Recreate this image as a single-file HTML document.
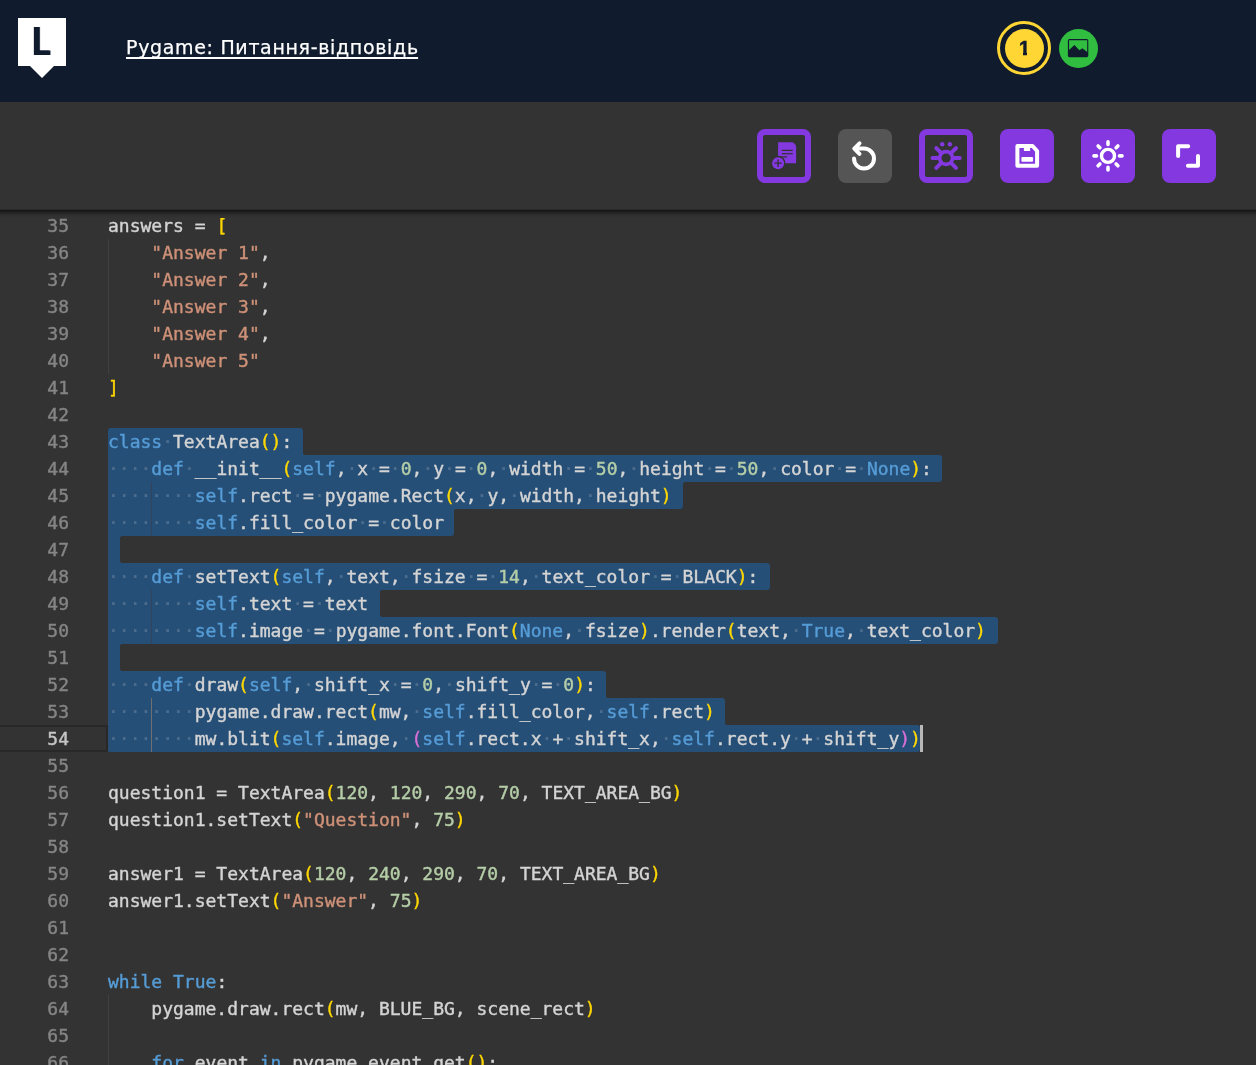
<!DOCTYPE html>
<html lang="uk">
<head>
<meta charset="utf-8">
<title>Pygame: Питання-відповідь</title>
<style>
*{box-sizing:border-box;margin:0;padding:0}
html,body{width:1256px;height:1065px;overflow:hidden;background:#333333}
body{position:relative;font-family:"Liberation Sans",sans-serif}
.header{position:absolute;left:0;top:0;width:1256px;height:102px;background:#101c2e}
.logo{position:absolute;left:18px;top:18px;width:48px;height:60px}
.logo svg{display:block}
.L{will-change:transform;position:absolute;left:14px;top:3.1px;font-weight:bold;font-size:41.2px;line-height:41.2px;color:#101c2e;transform-origin:0 0;transform:scaleX(0.70);text-shadow:2.6px 0 0 #101c2e}
.title{will-change:transform;position:absolute;left:126px;top:35px;color:#fff;font-family:"DejaVu Sans","Liberation Sans",sans-serif;font-size:19px;line-height:24px;white-space:nowrap;letter-spacing:0.67px;text-decoration-skip-ink:none;-webkit-text-stroke:0.25px #fff;text-decoration:underline;text-decoration-thickness:1.5px;text-underline-offset:3px}
.step{position:absolute;left:1004.8px;top:28.7px;width:39.5px;height:39.5px;border-radius:50%;background:#ffd633;-webkit-text-stroke:0.5px #101c2e;color:#101c2e;font-weight:bold;font-size:19.5px;line-height:22px}
.step span{will-change:transform;position:absolute;left:14.2px;top:8.1px;display:block;width:11px;height:22px}
.step span::before,.step span::after{content:"";position:absolute;top:14.4px;height:4.6px;background:#ffd633}
.step span::before{left:-1px;width:5.2px}
.step span::after{left:7.7px;width:5px}
.ring{position:absolute;left:996.9px;top:20.8px;width:54.4px;height:54.4px;border:3.4px solid #ffd633;border-radius:50%}
.imgbtn{position:absolute;left:1059px;top:28.8px;width:39.3px;height:39.3px;border-radius:50%;background:#30bd40}
.imgbtn svg{position:absolute;left:0;top:0}
.toolbar{position:absolute;left:0;top:102px;width:1256px;height:107px;background:#333333}
.btn{position:absolute;top:27px;width:54px;height:54px;border-radius:8px;background:#8338e0}
.btn.o{background:transparent;border:6px solid #8338e0}
.btn.gr{background:#555555}
.btn svg{position:absolute;left:0;top:0}
.btn.o svg{left:-6px;top:-6px}
.editor{position:absolute;left:0;top:209px;width:1256px;height:856px;background:#333333;overflow:hidden}
.ed{position:absolute;left:0;top:-209px;width:1256px;height:1065px;font-family:"DejaVu Sans Mono","Liberation Mono",monospace;font-size:18px;line-height:27px;color:#d4d4d4;white-space:pre;-webkit-text-stroke:0.4px;will-change:transform}
.ln{position:absolute;left:0;width:69px;height:27px;text-align:right;color:#858585}
.ln.act{color:#c6c6c6}
.cl{position:absolute;left:108px;height:27px}
.k{color:#569cd6}.s{color:#ce9178}.n{color:#b5cea8}
.b0{color:#ffd700}.b1{color:#da70d6}.b2{color:#179fff}
.w{color:rgba(227,228,226,0.19);-webkit-text-stroke:0.2px}
.g{position:absolute;width:1px;height:27px;background:#404040}
.gs{background:#34425c}.gs0{background:#2d4b6c}.ga{background:#707070}
.sel{position:absolute;left:108px;height:27px;background:#264f78}
.cc{position:absolute;width:3px;height:3px}
.curline{position:absolute;left:-2px;width:110px;height:27px;border:2px solid #282828}
.cursor{position:absolute;width:3px;height:27px;background:#b8b8b8}
.shadow{position:absolute;left:0;top:209px;width:1256px;height:9px;background:linear-gradient(to bottom,#2a2a2a 0px,#2a2a2a 1px,#171717 1px,#171717 2px,#1c1c1c 2px,#1c1c1c 3px,#222222 3px,#222222 4px,#282828 4px,#282828 5px,#2c2c2c 5px,#2c2c2c 6px,#2f2f2f 6px,#2f2f2f 7px,#313131 7px,#313131 8px,#323232 8px,#323232 9px);pointer-events:none}
</style>
</head>
<body>
<div class="header">
  <div class="logo">
    <svg width="48" height="60" viewBox="0 0 48 60"><path d="M0 0H48V48H36L24 60L12 48H0Z" fill="#fff"/></svg>
    <div class="L">L</div>
  </div>
  <div class="title">Pygame: Питання-відповід<span style="letter-spacing:0">ь</span></div>
  <div class="ring"></div>
  <div class="step"><span>1</span></div>
  <div class="imgbtn">
    <svg width="40" height="40" viewBox="0 0 40 40"><rect x="8.9" y="10.1" width="20.4" height="18.1" rx="1.6" fill="#101c2e"/><path d="M10.1 11.3H28.2V22.9L23.4 19.2L20.4 21.2L15.4 16L10.1 21.1Z" fill="#30bd40"/></svg>
  </div>
</div>
<div class="toolbar">
  <div class="btn o" style="left:757px">
    <svg width="54" height="54" viewBox="0 0 54 54">
      <path d="M21.1 13.2H34.1A5 5 0 0 1 39.1 18.2V34.2H21.1Z" fill="#8338e0"/>
      <rect x="24.7" y="20.8" width="11.1" height="1.2" fill="#333"/>
      <rect x="24.7" y="24.1" width="11.1" height="1.2" fill="#333"/>
      <rect x="21.9" y="27.3" width="8.2" height="1.2" fill="#333"/>
      <circle cx="21.1" cy="34.2" r="7.5" fill="#333"/>
      <circle cx="21.1" cy="34.2" r="6" fill="#8338e0"/>
      <path d="M17.4 34.2H24.8M21.1 30.5V37.9" stroke="#333" stroke-width="1.3" fill="none"/>
    </svg>
  </div>
  <div class="btn gr" style="left:838px">
    <svg width="54" height="54" viewBox="0 0 54 54"><path d="M21.5 14.3L16.3 19.6L21.5 24.9M16.3 19.6H26A10 10 0 1 1 16 29.6" stroke="#fff" stroke-width="4" fill="none" stroke-linecap="round" stroke-linejoin="round"/></svg>
  </div>
  <div class="btn o" style="left:919px">
    <svg width="54" height="54" viewBox="0 0 54 54">
      <g stroke="#8338e0" stroke-width="4" stroke-linecap="round" fill="none">
        <path d="M13.5 29H40.7M17.3 19.2L37 38.8M37 19.2L17.3 38.8"/>
      </g>
      <circle cx="27.1" cy="29" r="8.3" fill="#8338e0"/>
      <circle cx="27.1" cy="29" r="4.6" fill="#333"/>
      <circle cx="23.2" cy="15.3" r="2.2" fill="#8338e0"/>
      <circle cx="30.9" cy="15.3" r="2.2" fill="#8338e0"/>
    </svg>
  </div>
  <div class="btn" style="left:1000px">
    <svg width="54" height="54" viewBox="0 0 54 54">
      <path d="M17.4 17H32.6L37.1 22V36.8H17.4Z" stroke="#fff" stroke-width="4" fill="none" stroke-linejoin="round"/>
      <rect x="23.9" y="18" width="6.2" height="4" fill="#fff"/>
      <rect x="21.4" y="27.9" width="11.7" height="4.9" rx="1" fill="#fff"/>
    </svg>
  </div>
  <div class="btn" style="left:1081px">
    <svg width="54" height="54" viewBox="0 0 54 54">
      <circle cx="27" cy="26.9" r="6.5" stroke="#fff" stroke-width="3.4" fill="none"/>
      <g stroke="#fff" stroke-width="3.6" stroke-linecap="round">
        <path d="M27 12.9V15.4M27 38.4V40.9M13 26.9H15.5M38.5 26.9H41M17.1 17L18.9 18.8M35.1 35L36.9 36.8M36.9 17L35.1 18.8M18.9 35L17.1 36.8"/>
      </g>
    </svg>
  </div>
  <div class="btn" style="left:1162px">
    <svg width="54" height="54" viewBox="0 0 54 54"><path d="M16.1 27V17.2H26.2M25.9 36.8H36V26.9" stroke="#fff" stroke-width="4" fill="none" stroke-linecap="round" stroke-linejoin="round"/></svg>
  </div>
</div>
<div class="editor"><div class="ed">
<div class="sel" style="top:428px;width:195.00px;border-radius:3px 3px 0px 0px"></div>
<div class="cc" style="top:452px;left:303.00px;background:radial-gradient(circle at 100% 0%, transparent 3px, #264f78 3.5px)"></div>
<div class="sel" style="top:455px;width:834.00px;border-radius:0px 3px 3px 0px"></div>
<div class="sel" style="top:482px;width:574.50px;border-radius:0px 0px 3px 0px"></div>
<div class="cc" style="top:482px;left:682.50px;background:radial-gradient(circle at 100% 100%, transparent 3px, #264f78 3.5px)"></div>
<div class="sel" style="top:509px;width:346.00px;border-radius:0px 0px 3px 0px"></div>
<div class="cc" style="top:509px;left:454.00px;background:radial-gradient(circle at 100% 100%, transparent 3px, #264f78 3.5px)"></div>
<div class="sel" style="top:536px;width:11.50px;border-radius:0px 0px 0px 0px"></div>
<div class="cc" style="top:536px;left:119.50px;background:radial-gradient(circle at 100% 100%, transparent 3px, #264f78 3.5px)"></div>
<div class="cc" style="top:560px;left:119.50px;background:radial-gradient(circle at 100% 0%, transparent 3px, #264f78 3.5px)"></div>
<div class="sel" style="top:563px;width:661.70px;border-radius:0px 3px 3px 0px"></div>
<div class="sel" style="top:590px;width:272.00px;border-radius:0px 0px 0px 0px"></div>
<div class="cc" style="top:590px;left:380.00px;background:radial-gradient(circle at 100% 100%, transparent 3px, #264f78 3.5px)"></div>
<div class="cc" style="top:614px;left:380.00px;background:radial-gradient(circle at 100% 0%, transparent 3px, #264f78 3.5px)"></div>
<div class="sel" style="top:617px;width:890.00px;border-radius:0px 3px 3px 0px"></div>
<div class="sel" style="top:644px;width:11.50px;border-radius:0px 0px 0px 0px"></div>
<div class="cc" style="top:644px;left:119.50px;background:radial-gradient(circle at 100% 100%, transparent 3px, #264f78 3.5px)"></div>
<div class="cc" style="top:668px;left:119.50px;background:radial-gradient(circle at 100% 0%, transparent 3px, #264f78 3.5px)"></div>
<div class="sel" style="top:671px;width:498.00px;border-radius:0px 3px 0px 0px"></div>
<div class="cc" style="top:695px;left:606.00px;background:radial-gradient(circle at 100% 0%, transparent 3px, #264f78 3.5px)"></div>
<div class="sel" style="top:698px;width:617.40px;border-radius:0px 3px 0px 0px"></div>
<div class="cc" style="top:722px;left:725.40px;background:radial-gradient(circle at 100% 0%, transparent 3px, #264f78 3.5px)"></div>
<div class="sel" style="top:725px;width:812.00px;border-radius:0px 3px 3px 3px"></div>
<div class="curline" style="top:725px"></div>
<div class="g" style="left:108.00px;top:239px"></div>
<div class="g" style="left:108.00px;top:266px"></div>
<div class="g" style="left:108.00px;top:293px"></div>
<div class="g" style="left:108.00px;top:320px"></div>
<div class="g" style="left:108.00px;top:347px"></div>
<div class="g gs0" style="left:108.00px;top:455px"></div>
<div class="g gs0" style="left:108.00px;top:482px"></div>
<div class="g gs" style="left:151.35px;top:482px"></div>
<div class="g gs0" style="left:108.00px;top:509px"></div>
<div class="g gs" style="left:151.35px;top:509px"></div>
<div class="g gs0" style="left:108.00px;top:536px"></div>
<div class="g gs0" style="left:108.00px;top:563px"></div>
<div class="g gs0" style="left:108.00px;top:590px"></div>
<div class="g gs" style="left:151.35px;top:590px"></div>
<div class="g gs0" style="left:108.00px;top:617px"></div>
<div class="g gs" style="left:151.35px;top:617px"></div>
<div class="g gs0" style="left:108.00px;top:644px"></div>
<div class="g gs0" style="left:108.00px;top:671px"></div>
<div class="g gs0" style="left:108.00px;top:698px"></div>
<div class="g ga" style="left:151.35px;top:698px"></div>
<div class="g gs0" style="left:108.00px;top:725px"></div>
<div class="g ga" style="left:151.35px;top:725px"></div>
<div class="g" style="left:108.00px;top:995px"></div>
<div class="g" style="left:108.00px;top:1022px"></div>
<div class="g" style="left:108.00px;top:1049px"></div>
<div class="ln" style="top:212px">35</div>
<div class="ln" style="top:239px">36</div>
<div class="ln" style="top:266px">37</div>
<div class="ln" style="top:293px">38</div>
<div class="ln" style="top:320px">39</div>
<div class="ln" style="top:347px">40</div>
<div class="ln" style="top:374px">41</div>
<div class="ln" style="top:401px">42</div>
<div class="ln" style="top:428px">43</div>
<div class="ln" style="top:455px">44</div>
<div class="ln" style="top:482px">45</div>
<div class="ln" style="top:509px">46</div>
<div class="ln" style="top:536px">47</div>
<div class="ln" style="top:563px">48</div>
<div class="ln" style="top:590px">49</div>
<div class="ln" style="top:617px">50</div>
<div class="ln" style="top:644px">51</div>
<div class="ln" style="top:671px">52</div>
<div class="ln" style="top:698px">53</div>
<div class="ln act" style="top:725px">54</div>
<div class="ln" style="top:752px">55</div>
<div class="ln" style="top:779px">56</div>
<div class="ln" style="top:806px">57</div>
<div class="ln" style="top:833px">58</div>
<div class="ln" style="top:860px">59</div>
<div class="ln" style="top:887px">60</div>
<div class="ln" style="top:914px">61</div>
<div class="ln" style="top:941px">62</div>
<div class="ln" style="top:968px">63</div>
<div class="ln" style="top:995px">64</div>
<div class="ln" style="top:1022px">65</div>
<div class="ln" style="top:1049px">66</div>
<div class="cl" style="top:212px">answers = <span class="b0">[</span></div>
<div class="cl" style="top:239px">    <span class="s">"Answer 1"</span>,</div>
<div class="cl" style="top:266px">    <span class="s">"Answer 2"</span>,</div>
<div class="cl" style="top:293px">    <span class="s">"Answer 3"</span>,</div>
<div class="cl" style="top:320px">    <span class="s">"Answer 4"</span>,</div>
<div class="cl" style="top:347px">    <span class="s">"Answer 5"</span></div>
<div class="cl" style="top:374px"><span class="b0">]</span></div>
<div class="cl" style="top:401px"></div>
<div class="cl" style="top:428px"><span class="k">class</span><span class="w">·</span>TextArea<span class="b0">(</span><span class="b0">)</span>:</div>
<div class="cl" style="top:455px"><span class="w">····</span><span class="k">def</span><span class="w">·</span>__init__<span class="b0">(</span><span class="k">self</span>,<span class="w">·</span>x<span class="w">·</span>=<span class="w">·</span><span class="n">0</span>,<span class="w">·</span>y<span class="w">·</span>=<span class="w">·</span><span class="n">0</span>,<span class="w">·</span>width<span class="w">·</span>=<span class="w">·</span><span class="n">50</span>,<span class="w">·</span>height<span class="w">·</span>=<span class="w">·</span><span class="n">50</span>,<span class="w">·</span>color<span class="w">·</span>=<span class="w">·</span><span class="k">None</span><span class="b0">)</span>:</div>
<div class="cl" style="top:482px"><span class="w">········</span><span class="k">self</span>.rect<span class="w">·</span>=<span class="w">·</span>pygame.Rect<span class="b0">(</span>x,<span class="w">·</span>y,<span class="w">·</span>width,<span class="w">·</span>height<span class="b0">)</span></div>
<div class="cl" style="top:509px"><span class="w">········</span><span class="k">self</span>.fill_color<span class="w">·</span>=<span class="w">·</span>color</div>
<div class="cl" style="top:536px"></div>
<div class="cl" style="top:563px"><span class="w">····</span><span class="k">def</span><span class="w">·</span>setText<span class="b0">(</span><span class="k">self</span>,<span class="w">·</span>text,<span class="w">·</span>fsize<span class="w">·</span>=<span class="w">·</span><span class="n">14</span>,<span class="w">·</span>text_color<span class="w">·</span>=<span class="w">·</span>BLACK<span class="b0">)</span>:</div>
<div class="cl" style="top:590px"><span class="w">········</span><span class="k">self</span>.text<span class="w">·</span>=<span class="w">·</span>text</div>
<div class="cl" style="top:617px"><span class="w">········</span><span class="k">self</span>.image<span class="w">·</span>=<span class="w">·</span>pygame.font.Font<span class="b0">(</span><span class="k">None</span>,<span class="w">·</span>fsize<span class="b0">)</span>.render<span class="b0">(</span>text,<span class="w">·</span><span class="k">True</span>,<span class="w">·</span>text_color<span class="b0">)</span></div>
<div class="cl" style="top:644px"></div>
<div class="cl" style="top:671px"><span class="w">····</span><span class="k">def</span><span class="w">·</span>draw<span class="b0">(</span><span class="k">self</span>,<span class="w">·</span>shift_x<span class="w">·</span>=<span class="w">·</span><span class="n">0</span>,<span class="w">·</span>shift_y<span class="w">·</span>=<span class="w">·</span><span class="n">0</span><span class="b0">)</span>:</div>
<div class="cl" style="top:698px"><span class="w">········</span>pygame.draw.rect<span class="b0">(</span>mw,<span class="w">·</span><span class="k">self</span>.fill_color,<span class="w">·</span><span class="k">self</span>.rect<span class="b0">)</span></div>
<div class="cl" style="top:725px"><span class="w">········</span>mw.blit<span class="b0">(</span><span class="k">self</span>.image,<span class="w">·</span><span class="b1">(</span><span class="k">self</span>.rect.x<span class="w">·</span>+<span class="w">·</span>shift_x,<span class="w">·</span><span class="k">self</span>.rect.y<span class="w">·</span>+<span class="w">·</span>shift_y<span class="b1">)</span><span class="b0">)</span></div>
<div class="cl" style="top:752px"></div>
<div class="cl" style="top:779px">question1 = TextArea<span class="b0">(</span><span class="n">120</span>, <span class="n">120</span>, <span class="n">290</span>, <span class="n">70</span>, TEXT_AREA_BG<span class="b0">)</span></div>
<div class="cl" style="top:806px">question1.setText<span class="b0">(</span><span class="s">"Question"</span>, <span class="n">75</span><span class="b0">)</span></div>
<div class="cl" style="top:833px"></div>
<div class="cl" style="top:860px">answer1 = TextArea<span class="b0">(</span><span class="n">120</span>, <span class="n">240</span>, <span class="n">290</span>, <span class="n">70</span>, TEXT_AREA_BG<span class="b0">)</span></div>
<div class="cl" style="top:887px">answer1.setText<span class="b0">(</span><span class="s">"Answer"</span>, <span class="n">75</span><span class="b0">)</span></div>
<div class="cl" style="top:914px"></div>
<div class="cl" style="top:941px"></div>
<div class="cl" style="top:968px"><span class="k">while</span> <span class="k">True</span>:</div>
<div class="cl" style="top:995px">    pygame.draw.rect<span class="b0">(</span>mw, BLUE_BG, scene_rect<span class="b0">)</span></div>
<div class="cl" style="top:1022px"></div>
<div class="cl" style="top:1049px">    <span class="k">for</span> event <span class="k">in</span> pygame.event.get<span class="b0">(</span><span class="b0">)</span>:</div>
<div class="cursor" style="left:920.00px;top:725px"></div>

</div></div>
<div class="shadow"></div>
</body>
</html>
